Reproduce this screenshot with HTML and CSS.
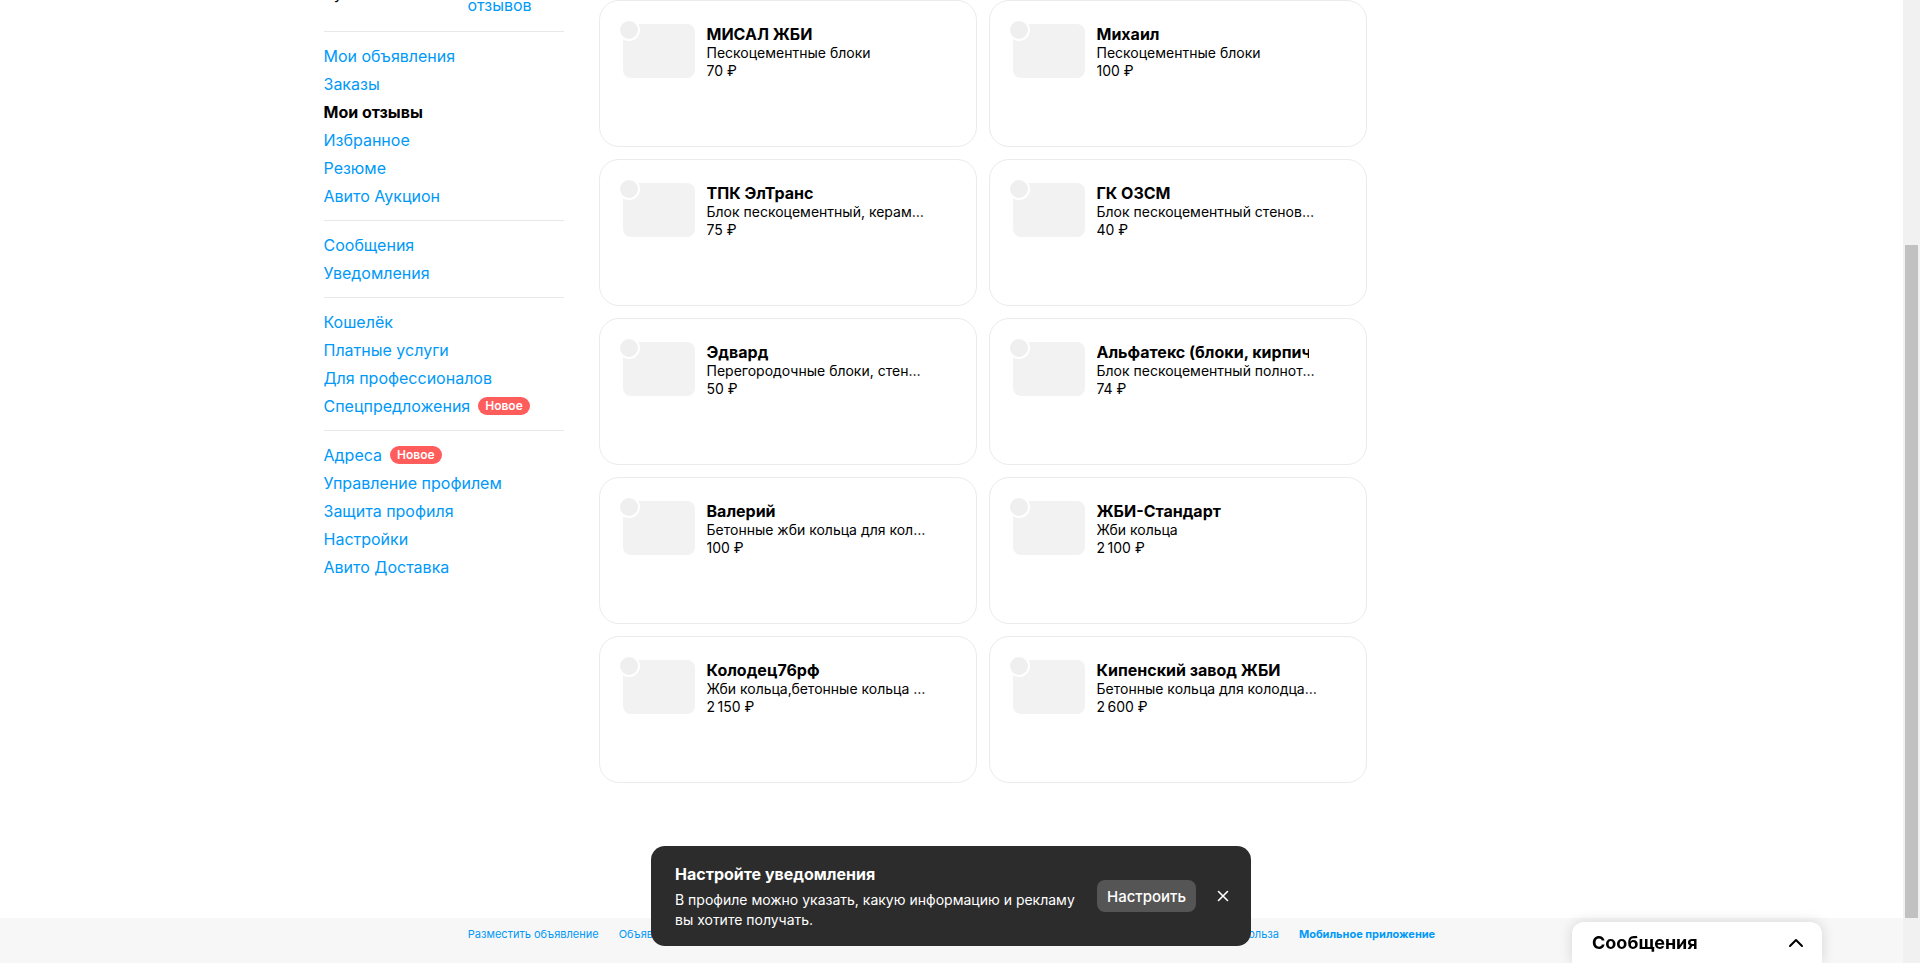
FILE: index.html
```html
<!DOCTYPE html>
<html lang="ru">
<head>
  <meta charset="UTF-8">
  <meta name="viewport" content="width=device-width, initial-scale=1.0">
  <title>Мои отзывы</title>
  <link rel="stylesheet" href="styles.css">
</head>
<body>

  <div class="page">
    <div class="container">

      <!-- левое меню профиля -->
      <aside class="sidebar">
        <div class="side-section rating">
          <span class="rating-name">Рустам</span>
          <a class="rating-count" href="#">24<br>отзывов</a>
        </div>
        <nav class="side-section">
          <a class="side-link" href="#">Мои объявления</a>
          <a class="side-link" href="#">Заказы</a>
          <a class="side-link active" href="#">Мои отзывы</a>
          <a class="side-link" href="#">Избранное</a>
          <a class="side-link" href="#">Резюме</a>
          <a class="side-link" href="#">Авито Аукцион</a>
        </nav>
        <nav class="side-section">
          <a class="side-link" href="#">Сообщения</a>
          <a class="side-link" href="#">Уведомления</a>
        </nav>
        <nav class="side-section">
          <a class="side-link" href="#">Кошелёк</a>
          <a class="side-link" href="#">Платные услуги</a>
          <a class="side-link" href="#">Для профессионалов</a>
          <a class="side-link" href="#">Спецпредложения <span class="badge">Новое</span></a>
        </nav>
        <nav class="side-section">
          <a class="side-link" href="#">Адреса <span class="badge">Новое</span></a>
          <a class="side-link" href="#">Управление профилем</a>
          <a class="side-link" href="#">Защита профиля</a>
          <a class="side-link" href="#">Настройки</a>
          <a class="side-link" href="#">Авито Доставка</a>
        </nav>
      </aside>

      <!-- продавцы, которым можно оставить отзыв -->
      <main class="reviews">
        <div class="card">
          <div class="card-photo"></div>
          <div class="card-info">
            <div class="card-title">МИСАЛ ЖБИ</div>
            <div class="card-text">Пескоцементные блоки</div>
            <div class="card-text">70&nbsp;₽</div>
          </div>
        </div>
        <div class="card">
          <div class="card-photo"></div>
          <div class="card-info">
            <div class="card-title">Михаил</div>
            <div class="card-text">Пескоцементные блоки</div>
            <div class="card-text">100&nbsp;₽</div>
          </div>
        </div>
        <div class="card">
          <div class="card-photo"></div>
          <div class="card-info">
            <div class="card-title">ТПК ЭлТранс</div>
            <div class="card-text">Блок пескоцементный, керамзитобетонный</div>
            <div class="card-text">75&nbsp;₽</div>
          </div>
        </div>
        <div class="card">
          <div class="card-photo"></div>
          <div class="card-info">
            <div class="card-title">ГК ОЗСМ</div>
            <div class="card-text">Блок пескоцементный стеновой</div>
            <div class="card-text">40&nbsp;₽</div>
          </div>
        </div>
        <div class="card">
          <div class="card-photo"></div>
          <div class="card-info">
            <div class="card-title">Эдвард</div>
            <div class="card-text">Перегородочные блоки, стеновые</div>
            <div class="card-text">50&nbsp;₽</div>
          </div>
        </div>
        <div class="card">
          <div class="card-photo"></div>
          <div class="card-info">
            <div class="card-title">Альфатекс (блоки, кирпич)</div>
            <div class="card-text">Блок пескоцементный полнотелый</div>
            <div class="card-text">74&nbsp;₽</div>
          </div>
        </div>
        <div class="card">
          <div class="card-photo"></div>
          <div class="card-info">
            <div class="card-title">Валерий</div>
            <div class="card-text">Бетонные жби кольца для колодцев</div>
            <div class="card-text">100&nbsp;₽</div>
          </div>
        </div>
        <div class="card">
          <div class="card-photo"></div>
          <div class="card-info">
            <div class="card-title">ЖБИ-Стандарт</div>
            <div class="card-text">Жби кольца</div>
            <div class="card-text">2&#8239;100&nbsp;₽</div>
          </div>
        </div>
        <div class="card">
          <div class="card-photo"></div>
          <div class="card-info">
            <div class="card-title">Колодец76рф</div>
            <div class="card-text">Жби кольца,бетонные кольца для колодца</div>
            <div class="card-text">2&#8239;150&nbsp;₽</div>
          </div>
        </div>
        <div class="card">
          <div class="card-photo"></div>
          <div class="card-info">
            <div class="card-title">Кипенский завод ЖБИ</div>
            <div class="card-text">Бетонные кольца для колодца и септика</div>
            <div class="card-text">2&#8239;600&nbsp;₽</div>
          </div>
        </div>
      </main>
    </div>

    <footer class="footer">
      <a href="#">Разместить объявление</a>
      <a href="#">Объявления</a>
      <a href="#">Магазины</a>
      <a href="#">Помощь</a>
      <a href="#">Безопасность</a>
      <a href="#">Реклама на сайте</a>
      <a href="#">О компании</a>
      <a href="#">Карьера</a>
      <a href="#">Авито Польза</a>
      <a class="footer-app" href="#">Мобильное приложение</a>
    </footer>
  </div>

  <!-- полоса прокрутки окна -->
  <div class="scrollbar">
    <div class="scroll-thumb"></div>
  </div>

  <!-- всплывающее предложение -->
  <div class="toast">
    <div class="toast-text">
      <div class="toast-title">Настройте уведомления</div>
      <p>В профиле можно указать, какую информацию и рекламу вы хотите получать.</p>
    </div>
    <button class="toast-btn">Настроить</button>
    <button class="toast-close" aria-label="Закрыть">
      <svg width="12" height="12" viewBox="0 0 12 12"><path d="M1.5 1.5l9 9M10.5 1.5l-9 9" stroke="#fff" stroke-width="1.6" stroke-linecap="round"/></svg>
    </button>
  </div>

  <!-- мессенджер -->
  <div class="messenger">
    <span>Сообщения</span>
    <svg width="18" height="18" viewBox="0 0 18 18"><path d="M3 12l6-6 6 6" fill="none" stroke="#000" stroke-width="2" stroke-linecap="round" stroke-linejoin="round"/></svg>
  </div>

</body>
</html>
```

FILE: styles.css
```css
html, body {
  margin: 0;
  height: 100%;
  overflow: hidden;
}
body {
  display: flex;
  font-family: Inter, 'Noto Sans', sans-serif;
  color: #000;
  background: #fff;
}
a { text-decoration: none; color: #0099f7; }

.page {
  flex: 1;
  min-width: 0;
  display: flex;
  flex-direction: column;
}
.container {
  width: 1256px;
  margin: 0 auto;
  display: flex;
  gap: 35px;
  padding-bottom: 135px;
}

/* меню */
.sidebar {
  width: 240px;
  flex-shrink: 0;
}
.side-section {
  display: flex;
  flex-direction: column;
  padding: 10px 0;
  border-bottom: 1px solid #e8e8e8;
}
.side-section:last-child { border-bottom: none; }
.rating {
  flex-direction: row;
  margin-top: -25px;
  padding: 0 0 16px;
  font-size: 16px;
  line-height: 20px;
}
.rating-name {
  width: 144px;
  margin-top: 8px;
  color: #000;
}
.side-link {
  display: flex;
  align-items: center;
  height: 28px;
  font-size: 16px;
}
.side-link.active {
  color: #000;
  font-weight: 700;
}
.badge {
  margin-left: 8px;
  padding: 0 7px;
  height: 18px;
  line-height: 18px;
  border-radius: 9px;
  background: #ff5c5c;
  color: #fff;
  font-size: 12px;
  font-weight: 600;
}

/* карточки */
.reviews {
  display: grid;
  grid-template-columns: repeat(2, 378px);
  gap: 12px;
  align-content: start;
}
.card {
  height: 147px;
  box-sizing: border-box;
  border: 1px solid #ebebeb;
  border-radius: 20px;
  padding: 23px;
  display: flex;
  align-items: flex-start;
  gap: 12px;
}
.card-photo {
  position: relative;
  flex-shrink: 0;
  width: 72px;
  height: 54px;
  border-radius: 8px;
  background: #f2f2f2;
}
.card-photo::before {
  content: '';
  position: absolute;
  left: -5px;
  top: -5px;
  width: 18px;
  height: 18px;
  border-radius: 50%;
  background: #efefef;
  border: 2px solid #fff;
}
.card-info {
  width: 222px;
  min-width: 0;
}
.card-title {
  max-width: 212px;
  font-size: 16px;
  font-weight: 700;
  line-height: 20px;
  white-space: nowrap;
  overflow: hidden;
}
.card-text {
  font-size: 14px;
  line-height: 18px;
  white-space: nowrap;
  overflow: hidden;
  text-overflow: ellipsis;
}

/* подвал */
.footer {
  flex: 1;
  background: #f7f7f7;
  display: flex;
  justify-content: center;
  gap: 20px;
  padding-top: 8px;
  font-size: 11px;
  line-height: 16px;
}
.footer-app { font-weight: 700; }

.scrollbar {
  width: 17px;
  flex-shrink: 0;
  background: #f1f1f1;
}
.scroll-thumb {
  margin: 245px 2px 0;
  height: 673px;
  background: #c1c1c1;
}

/* уведомление */
.toast {
  position: fixed;
  left: 651px;
  bottom: 17px;
  width: 600px;
  height: 100px;
  box-sizing: border-box;
  padding: 16px 20px 16px 24px;
  background: #2c2c2c;
  border-radius: 14px;
  color: #fff;
  display: flex;
  align-items: center;
}
.toast-text { flex: 1; }
.toast-title {
  font-size: 16px;
  font-weight: 700;
  line-height: 24px;
}
.toast-text p {
  margin: 4px 0 0;
  max-width: 410px;
  font-size: 14px;
  line-height: 20px;
}
.toast-btn {
  flex-shrink: 0;
  width: 99px;
  height: 32px;
  margin-left: 16px;
  border: none;
  border-radius: 8px;
  background: #555;
  color: #fff;
  font-family: inherit;
  font-size: 15px;
  font-weight: 500;
}
.toast-close {
  flex-shrink: 0;
  margin-left: 19px;
  width: 16px;
  height: 16px;
  padding: 0;
  border: none;
  background: none;
  display: flex;
  align-items: center;
  justify-content: center;
}

.messenger {
  position: fixed;
  right: 98px;
  bottom: 0;
  width: 250px;
  height: 41px;
  box-sizing: border-box;
  padding: 0 17px 0 20px;
  background: #fff;
  border-radius: 12px 12px 0 0;
  box-shadow: 0 0 14px rgba(0,0,0,0.14);
  display: flex;
  align-items: center;
  justify-content: space-between;
  font-size: 18px;
  font-weight: 700;
}
```
